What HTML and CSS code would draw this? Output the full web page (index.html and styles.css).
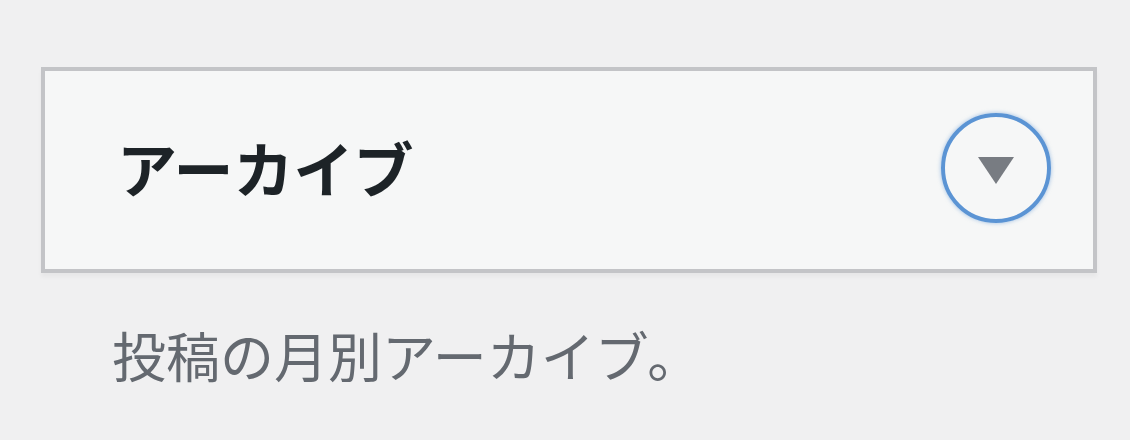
FILE: index.html
```html
<!DOCTYPE html>
<html lang="ja">
<head>
<meta charset="utf-8">
<link rel="stylesheet" href="styles.css">
</head>
<body>
<div class="page">
  <div class="widget">
    <h3 class="widget-title">アーカイブ</h3>
    <button class="toggle" aria-label="開閉">
      <svg width="36" height="27" viewBox="0 0 36 27"><polygon points="0,0 36,0 18,27" fill="#787c82"/></svg>
    </button>
  </div>
  <p class="desc">投稿の月別アーカイブ。</p>
</div>
</body>
</html>
```
FILE: styles.css
```css
html, body {
  margin: 0;
  padding: 0;
  background: #f0f0f1;
  width: 1130px;
  height: 440px;
  overflow: hidden;
}
.page {
  padding: 67px 0 0 41px;
  font-family: "Noto Sans CJK JP", sans-serif;
}
.widget {
  box-sizing: border-box;
  width: 1056px;
  height: 206px;
  border: 4px solid #c3c4c7;
  background: #f6f7f7;
  box-shadow: 0 4px 4px rgba(0,0,0,0.04);
  display: flex;
  align-items: center;
  justify-content: space-between;
  padding: 0 42px 0 72px;
}
.widget-title {
  margin: -6px 0 0 0;
  font-size: 60px;
  font-weight: 700;
  color: #1d2327;
  line-height: 1;
}
.toggle {
  box-sizing: border-box;
  width: 110px;
  height: 110px;
  border-radius: 50%;
  border: 4px solid #5b94d4;
  box-shadow: 0 0 4px rgba(91,148,212,0.6);
  background: transparent;
  display: flex;
  align-items: center;
  justify-content: center;
  padding: 5px 0 0 0;
  margin-top: -5px;
}
.desc {
  margin: 55px 0 0 71px;
  font-size: 54px;
  line-height: 1;
  color: #646970;
}
```
